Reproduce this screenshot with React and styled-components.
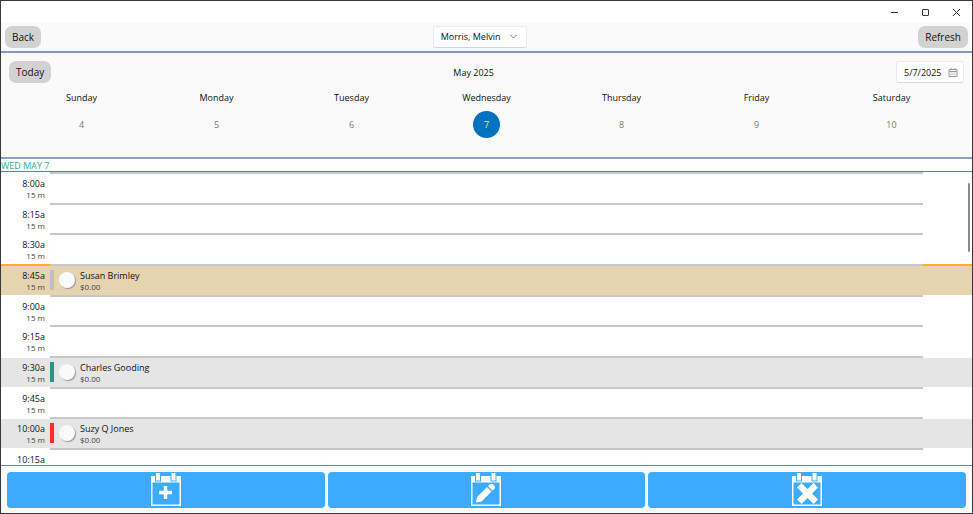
import React from "react";
import styled, { createGlobalStyle } from "styled-components";

const days = [
  { name: "Sunday", date: 4 },
  { name: "Monday", date: 5 },
  { name: "Tuesday", date: 6 },
  { name: "Wednesday", date: 7, selected: true },
  { name: "Thursday", date: 8 },
  { name: "Friday", date: 9 },
  { name: "Saturday", date: 10 },
];

const slots = [
  { time: "8:00a", length: "15 m" },
  { time: "8:15a", length: "15 m" },
  { time: "8:30a", length: "15 m" },
  {
    time: "8:45a",
    length: "15 m",
    client: "Susan Brimley",
    price: "$0.00",
    color: "#bfbfc0",
    fill: "#e6d4b1",
    current: true,
  },
  { time: "9:00a", length: "15 m" },
  { time: "9:15a", length: "15 m" },
  {
    time: "9:30a",
    length: "15 m",
    client: "Charles Gooding",
    price: "$0.00",
    color: "#279489",
    fill: "#e5e5e5",
  },
  { time: "9:45a", length: "15 m" },
  {
    time: "10:00a",
    length: "15 m",
    client: "Suzy Q Jones",
    price: "$0.00",
    color: "#ff2a2a",
    fill: "#e5e5e5",
  },
  { time: "10:15a" },
];

function CalendarIcon({ children }) {
  return (
    <svg width="32" height="34" viewBox="0 0 32 34" aria-hidden="true">
      <path
        fill="#fff"
        fillRule="evenodd"
        d="M1 4H31V34H1ZM2.500 10.500V32.500H29.500V10.500Z"
      />
      <path fill="#3dabff" d="M5 3H11V9.500H5ZM20.500 3H26.500V9.500H20.500Z" />
      <path fill="#fff" d="M6 1H10V8.500H6ZM21.500 1H25.500V8.500H21.500Z" />
      {children}
    </svg>
  );
}

function App() {
  return (
    <>
      <GlobalStyle />
      <Window>
        <TitleBar>
          <CaptionButton aria-label="Minimize">
            <svg width="9" height="9" viewBox="0 0 9 9">
              <path d="M1 4.5H8" stroke="#333" fill="none" />
            </svg>
          </CaptionButton>
          <CaptionButton aria-label="Maximize">
            <svg width="9" height="9" viewBox="0 0 9 9">
              <rect x="1.5" y="1.5" width="6" height="6" rx="0.5" stroke="#333" fill="none" />
            </svg>
          </CaptionButton>
          <CaptionButton aria-label="Close">
            <svg width="9" height="9" viewBox="0 0 9 9">
              <path d="M1 1L8 8M8 1L1 8" stroke="#333" fill="none" />
            </svg>
          </CaptionButton>
        </TitleBar>

        <Toolbar>
          <PillButton>Back</PillButton>
          <SelectBox>
            <select aria-label="Provider" defaultValue="Morris, Melvin">
              <option>Morris, Melvin</option>
            </select>
            <svg width="7" height="5" viewBox="0 0 7 5" aria-hidden="true">
              <path d="M0.5 1L3.5 4L6.5 1" stroke="#777" fill="none" />
            </svg>
          </SelectBox>
          <PillButton>Refresh</PillButton>
        </Toolbar>

        {/* WEEK PICKER */}
        <Week>
          <WeekHeader>
            <PillButton>Today</PillButton>
            <span>May 2025</span>
            <DateBox>
              <input aria-label="Date" type="text" defaultValue="5/7/2025" />
              <svg width="10" height="9" viewBox="0 0 10 9" aria-hidden="true">
                <path
                  d="M1 1.5H9V8.5H1ZM1 3.5H9M3 0V2M7 0V2"
                  stroke="#9a9a9a"
                  fill="none"
                />
                <path d="M2.5 5H7.5M2.5 6.5H7.5" stroke="#aaa" strokeDasharray="1 1" />
              </svg>
            </DateBox>
          </WeekHeader>
          <Days>
            {days.map((day) => (
              <Day key={day.name}>
                <span>{day.name}</span>
                <DateButton $selected={day.selected}>{day.date}</DateButton>
              </Day>
            ))}
          </Days>
        </Week>

        <DayTitle>WED MAY 7</DayTitle>

        {/* SLOTS */}
        <Schedule>
          {slots.map((slot) => (
            <Slot key={slot.time}>
              <TimeCell $fill={slot.fill} $current={slot.current}>
                <Time>{slot.time}</Time>
                {slot.length && <Small>{slot.length}</Small>}
              </TimeCell>
              <BodyCell $fill={slot.fill}>
                {slot.client && (
                  <>
                    <Marker $color={slot.color} />
                    <Check type="checkbox" id={slot.time} />
                    <Client htmlFor={slot.time}>
                      <Time>{slot.client}</Time>
                      <Small>{slot.price}</Small>
                    </Client>
                  </>
                )}
              </BodyCell>
              <EndCell $fill={slot.fill} $current={slot.current} />
            </Slot>
          ))}
          <ScrollThumb />
        </Schedule>

        <Actions>
          <ActionButton aria-label="Add appointment">
            <CalendarIcon>
              <path d="M15.500 14V27M9 20.500H22" stroke="#fff" strokeWidth="3.500" />
            </CalendarIcon>
          </ActionButton>
          <ActionButton aria-label="Edit appointment">
            <CalendarIcon>
              <path
                fill="#fff"
                d="M6 30.500L7 25L17 15L21.500 19.500L11.500 29.500ZM18 14L19.500 12.500Q22 11 24 13Q26 15 24.500 17L22.500 18.500Z"
              />
            </CalendarIcon>
          </ActionButton>
          <ActionButton aria-label="Delete appointment">
            <CalendarIcon>
              <path
                fill="#fff"
                d="M10.500 11L16.500 17L22.500 11L27 15.500L21 21.500L27 27.500L22.500 32L16.500 26L10.500 32L6 27.500L12 21.500L6 15.500Z"
              />
            </CalendarIcon>
          </ActionButton>
        </Actions>
      </Window>
    </>
  );
}

export default App;

const GlobalStyle = createGlobalStyle`
  * {
    box-sizing: border-box;
  }
  body {
    margin: 0;
    font-family: "Open Sans", "Noto Sans", sans-serif;
    font-size: 9px;
    color: #111;
  }
  button, input, select {
    margin: 0;
    padding: 0;
    border: 0;
    font: inherit;
    color: inherit;
    background: transparent;
  }
`;

const Window = styled.div`
  display: flex;
  flex-direction: column;
  height: 100vh;
  border: 1px solid #39393b;
  background: #fff;
`;

const TitleBar = styled.div`
  display: flex;
  justify-content: flex-end;
  flex: none;
  height: 22px;
`;

const CaptionButton = styled.button`
  display: flex;
  align-items: center;
  justify-content: center;
  width: 31px;
`;

const Toolbar = styled.div`
  display: flex;
  justify-content: space-between;
  align-items: center;
  flex: none;
  height: 30px;
  padding: 0 4px 1px;
  border-bottom: 2px solid #7f9aba;
  background: #fafafa;
`;

const PillButton = styled.button`
  height: 22px;
  padding: 0 7px;
  border-radius: 7px;
  background: #d2d2d2;
  font-size: 10px;
`;

const SelectBox = styled.div`
  display: flex;
  align-items: center;
  justify-content: space-between;
  width: 94px;
  height: 22px;
  padding: 0 9px 0 7px;
  border: 1px solid #ebebeb;
  border-bottom-color: #d6d6d6;
  border-radius: 3px;
  background: #fff;

  select {
    width: 66px;
    appearance: none;
  }
`;

const Week = styled.div`
  flex: none;
  height: 106px;
  padding-top: 8px;
  border-bottom: 2px solid #8ba3bf;
  background: #fafafa;
`;

const WeekHeader = styled.div`
  display: flex;
  justify-content: space-between;
  align-items: center;
  padding: 0 8px;
`;

const DateBox = styled.div`
  display: flex;
  align-items: center;
  justify-content: space-between;
  width: 68px;
  height: 22px;
  padding: 0 5px 0 7px;
  border: 1px solid #ebebeb;
  border-bottom-color: #d6d6d6;
  border-radius: 3px;
  background: #fff;

  input {
    width: 42px;
  }
`;

const Days = styled.div`
  display: grid;
  grid-template-columns: repeat(7, 1fr);
  padding: 8px 13px 0;
`;

const Day = styled.div`
  display: flex;
  flex-direction: column;
  align-items: center;
  gap: 6px;
  line-height: 14px;
`;

const DateButton = styled.button`
  width: 27px;
  height: 27px;
  border-radius: 50%;
  color: ${(props) => (props.$selected ? "#eaff00" : "#777")};
  background: ${(props) => (props.$selected ? "#0173be" : "transparent")};
`;

const DayTitle = styled.div`
  flex: none;
  height: 13px;
  border-bottom: 1px solid #5f7f9f;
  line-height: 13px;
  color: #2fae8a;
`;

const Schedule = styled.div`
  position: relative;
  display: grid;
  grid-template-rows: repeat(9, minmax(28px, 1fr)) 17px;
  flex: 1;
  min-height: 0;
  overflow: hidden;
`;

const Slot = styled.div`
  display: grid;
  grid-template-columns: 49px 1fr 49px;
`;

const Cell = styled.div`
  border-top: 2px solid transparent;
  background: ${(props) => props.$fill || "#fff"};
  background-clip: padding-box;
`;

const TimeCell = styled(Cell)`
  display: flex;
  flex-direction: column;
  padding: 4px 5px 0 0;
  border-color: ${(props) => (props.$current ? "#fdb022" : "transparent")};
  text-align: right;
`;

const BodyCell = styled(Cell)`
  display: flex;
  align-items: flex-start;
  border-color: #c8c8c8;
`;

const EndCell = styled(Cell)`
  border-color: ${(props) => (props.$current ? "#fdb022" : "transparent")};
`;

const Time = styled.span`
  font-size: 9px;
  line-height: 11px;
`;

const Small = styled.span`
  font-size: 8px;
  line-height: 11px;
  color: #444;
`;

const Marker = styled.div`
  width: 4px;
  height: 20px;
  margin-top: 4px;
  background: ${(props) => props.$color};
`;

const Check = styled.input`
  appearance: none;
  width: 16px;
  height: 16px;
  margin: 6px 5px 0;
  border-radius: 50%;
  background: #fafafa;
  box-shadow: 1px 1px 1px #999;
`;

const Client = styled.label`
  display: flex;
  flex-direction: column;
  padding-top: 4px;
`;

const ScrollThumb = styled.div`
  position: absolute;
  top: 11px;
  right: 2px;
  width: 2px;
  height: 69px;
  border-radius: 1px;
  background: #8b8b8b;
`;

const Actions = styled.div`
  display: grid;
  grid-template-columns: repeat(3, 1fr);
  gap: 3px;
  flex: none;
  padding: 6px 6px 5px;
  border-top: 1px solid #6684a3;
  background: #fafafa;
`;

const ActionButton = styled.button`
  display: flex;
  align-items: flex-start;
  justify-content: center;
  height: 36px;
  border-radius: 4px;
  background: #3dabff;
`;
